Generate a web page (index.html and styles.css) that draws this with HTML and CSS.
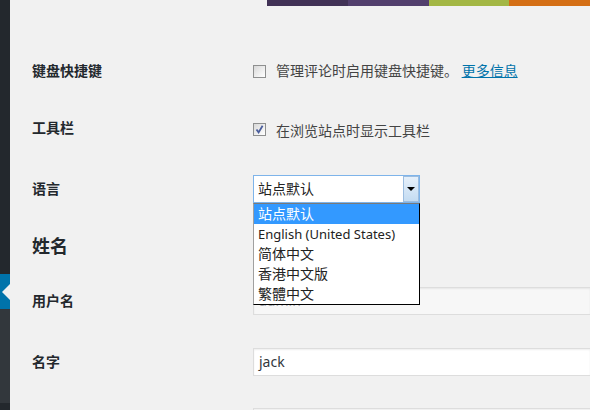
FILE: index.html
```html
<!DOCTYPE html>
<html lang="zh-CN">
<head>
<meta charset="utf-8">
<title>个人资料</title>
<link rel="stylesheet" href="styles.css">
</head>
<body>
<div class="app">
  <aside class="sidebar">
    <div class="menu-top"></div>
    <div class="menu-current"><span class="arrow"></span></div>
    <div class="submenu"></div>
    <div class="menu-rest"></div>
  </aside>
  <main class="content">
    <div class="schemes">
      <span class="sw sw1"></span><span class="sw sw2"></span><span class="sw sw3"></span><span class="sw sw4"></span>
    </div>

    <div class="row row-keys">
      <div class="label">键盘快捷键</div>
      <div class="field">
        <span class="cb"></span>
        <span class="cb-text">管理评论时启用键盘快捷键。 <a class="link" href="#">更多信息</a></span>
      </div>
    </div>

    <div class="row row-toolbar">
      <div class="label">工具栏</div>
      <div class="field">
        <span class="cb cb-raised"><svg class="check" viewBox="0 0 11 11" width="11" height="11"><path d="M2.5 5.5 L4.6 8.4 L8.6 1.8" fill="none" stroke="#4a5d9c" stroke-width="1.8"/></svg></span>
        <span class="cb-text">在浏览站点时显示工具栏</span>
      </div>
    </div>

    <div class="row row-lang">
      <div class="label">语言</div>
      <div class="field">
        <div class="select">
          <span class="select-value">站点默认</span>
          <span class="select-btn"><span class="tri"></span></span>
          <ul class="options">
            <li class="opt opt-active">站点默认</li>
            <li class="opt opt-en">English (United States)</li>
            <li class="opt">简体中文</li>
            <li class="opt">香港中文版</li>
            <li class="opt">繁體中文</li>
          </ul>
        </div>
      </div>
    </div>

    <h2 class="heading">姓名</h2>

    <div class="row row-user">
      <div class="label">用户名</div>
      <div class="field">
        <div class="input input-disabled">admin</div>
      </div>
    </div>

    <div class="row row-first">
      <div class="label">名字</div>
      <div class="field">
        <div class="input">jack</div>
      </div>
    </div>

    <div class="row row-last">
      <div class="label"></div>
      <div class="field">
        <div class="input"></div>
      </div>
    </div>
  </main>
</div>
</body>
</html>
```

FILE: styles.css
```css
* { box-sizing: border-box; }

html, body {
  margin: 0;
  padding: 0;
  width: 590px;
  height: 410px;
  overflow: hidden;
  background: #f1f1f1;
  font-family: "Noto Sans", "Noto Sans CJK SC", sans-serif;
  font-size: 14px;
  color: #444;
}

.app {
  display: flex;
  height: 410px;
  overflow: hidden;
}

.sidebar {
  width: 10px;
  flex: none;
  display: flex;
  flex-direction: column;
}
.menu-top { height: 274px; background: #23282d; }
.menu-current {
  height: 35px;
  background: #0073aa;
  position: relative;
}
.arrow {
  position: absolute;
  right: 0;
  top: 10px;
  width: 0;
  height: 0;
  border-top: 8px solid transparent;
  border-bottom: 8px solid transparent;
  border-right: 8px solid #f1f1f1;
}
.submenu { height: 94px; background: #32373c; }
.menu-rest { flex: 1; background: #23282d; }

.content {
  flex: 1;
  min-width: 0;
  padding-left: 22px;
  display: flex;
  flex-direction: column;
  overflow: hidden;
}

.schemes {
  margin-left: 235px;
  width: 323px;
  height: 6px;
  display: flex;
  flex: none;
}
.sw { flex: 1; }
.sw1 { background: #413256; }
.sw2 { background: #523f6d; }
.sw3 { background: #a3b745; }
.sw4 { background: #d46f15; }

.row {
  display: flex;
  align-items: center;
  flex: none;
}
.label {
  width: 221px;
  flex: none;
  font-weight: bold;
  color: #23282d;
  line-height: 20px;
}
.field {
  display: flex;
  align-items: center;
  flex: 1;
  min-width: 0;
}

.row-keys { margin-top: 50px; height: 30px; }
.row-toolbar { margin-top: 27px; height: 30px; }
.row-lang { margin-top: 31px; height: 30px; position: relative; z-index: 2; }
.row-user { margin-top: 26px; height: 28px; }
.row-first { margin-top: 33px; height: 28px; }
.row-last { margin-top: 32px; height: 2px; align-items: flex-start; }

.cb {
  width: 13px;
  height: 13px;
  flex: none;
  border: 1px solid #8e8f8f;
  background: linear-gradient(135deg, #d8d8d8 0%, #f4f4f4 70%, #fff 100%);
  margin-right: 10px;
  display: flex;
  align-items: center;
  justify-content: center;
}
.cb-raised { align-self: flex-start; margin-top: 7px; }
.check { display: block; }
.cb-text {
  line-height: 20px;
  color: #444;
  white-space: nowrap;
}
.row-toolbar .cb-text { align-self: flex-start; margin-top: 5px; }
.link {
  color: #0073aa;
  text-decoration: underline;
}

.select {
  position: relative;
  width: 167px;
  height: 28px;
  border: 1px solid #7eb4ea;
  background: #fff;
  display: flex;
  align-items: center;
}
.select-value {
  flex: 1;
  padding-left: 4px;
  color: #222;
  line-height: 20px;
}
.select-btn {
  width: 16px;
  height: 26px;
  flex: none;
  border: 1px solid #9cbde0;
  background: linear-gradient(#e6f0fa, #c4dcf2);
  display: flex;
  align-items: center;
  justify-content: center;
}
.tri {
  width: 0;
  height: 0;
  border-left: 4px solid transparent;
  border-right: 4px solid transparent;
  border-top: 4px solid #000;
}
.options {
  position: absolute;
  top: 27px;
  left: -1px;
  width: 167px;
  margin: 0;
  padding: 0;
  list-style: none;
  background: #fff;
  border: 1px solid #000;
  border-left-color: #a0a0a0;
  border-top-color: #7a7a7a;
}
.opt {
  height: 20px;
  line-height: 20px;
  padding-left: 4px;
  color: #222;
  white-space: nowrap;
}
.opt-active {
  background: #3399ff;
  color: #fff;
}
.opt-en { font-size: 13px; }

.heading {
  margin: 27px 0 0;
  height: 30px;
  line-height: 30px;
  font-size: 18px;
  font-weight: bold;
  color: #23282d;
  flex: none;
}

.input {
  width: 338px;
  flex: none;
  height: 28px;
  border: 1px solid #ddd;
  box-shadow: inset 0 1px 2px rgba(0, 0, 0, 0.07);
  background: #fff;
  padding-left: 5px;
  line-height: 26px;
  color: #32373c;
}
.row-last .input { height: 2px; border-bottom: 0; }
.input-disabled {
  background: #f7f7f7;
  color: #a0a5aa;
}
```
